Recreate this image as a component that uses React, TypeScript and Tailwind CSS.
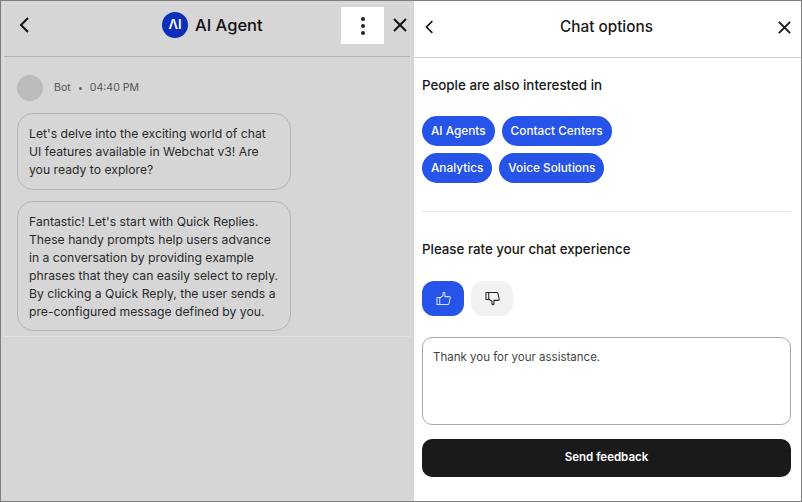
const font = { fontFamily: '"Inter", "Noto Sans", sans-serif' };

function BackIcon({ className }: { className: string }) {
    return (
        <svg viewBox="0 0 12 18" className={className} fill="none" stroke="currentColor" strokeWidth="2">
            <path d="M10 2 3 9l7 7" />
        </svg>
    );
}

function CloseIcon({ className }: { className: string }) {
    return (
        <svg viewBox="0 0 16 16" className={className} fill="none" stroke="currentColor" strokeWidth="2">
            <path d="M2 2l12 12M14 2 2 14" />
        </svg>
    );
}

function ThumbIcon({ className }: { className: string }) {
    return (
        <svg viewBox="0 0 16 16" className={className} fill="none" stroke="currentColor" strokeWidth="1.1" strokeLinejoin="round">
            <path d="M1 7h3v7.5H1zM4 7.5 7.5 5V2c0-1 2-1 2 .5V6h4.5c1 0 1.3.8 1.1 1.5l-1.3 6c-.2.7-.6 1-1.3 1H4" />
        </svg>
    );
}

const chips = [['AI Agents', 'Contact Centers'], ['Analytics', 'Voice Solutions']];

export default function App() {
    return (
        <div style={font} className="flex h-[502px] w-[802px] overflow-hidden border border-[#7f7f7f] bg-white">
            {/* dimmed chat behind the options sheet */}
            <div className="w-[413px] shrink-0 bg-[#d6d6d6] pl-[2px] pr-[3px] pt-[2px]">
                <div className="flex flex-col border-x border-t border-[#dedede]">
                    <div className="flex h-[53px] shrink-0 items-center border-b border-[#b4b4b4] pb-[10px] pl-[14px] text-[#111]">
                        <BackIcon className="h-[18px] w-[12px] shrink-0" />
                        <div className="ml-[132px] flex h-[26px] w-[26px] shrink-0 items-center justify-center rounded-full bg-[#0b2fb8] text-[13px] font-semibold text-white">
                            ΛI
                        </div>
                        <span className="ml-[7px] w-[67px] shrink-0 whitespace-nowrap text-[16.5px] font-medium leading-none">AI Agent</span>
                        <div className="ml-[79px] mt-[3px] flex h-[37px] w-[43px] shrink-0 flex-col items-center justify-center gap-[3px] self-start bg-white">
                            <span className="h-[4px] w-[4px] rounded-full bg-[#222]" />
                            <span className="h-[4px] w-[4px] rounded-full bg-[#222]" />
                            <span className="h-[4px] w-[4px] rounded-full bg-[#222]" />
                        </div>
                        <CloseIcon className="ml-[8px] h-[16px] w-[16px] shrink-0" />
                    </div>
                    <div className="flex h-[280px] shrink-0 flex-col border-b border-[#e0e0e0] pl-[13px] pt-[18px]">
                        <div className="flex items-center">
                            <div className="h-[26px] w-[26px] rounded-full bg-[#bcbcbc]" />
                            <span className="ml-[11px] text-[10.6px] text-[#555]">Bot</span>
                            <span className="mx-[8px] h-[3px] w-[3px] rounded-full bg-[#666]" />
                            <span className="text-[10.6px] text-[#555]">04:40 PM</span>
                        </div>
                        <div className="mt-[12px] w-[274px] rounded-[16px] border border-[#b5b5b5] pb-[10px] pl-[11px] pr-[14px] pt-[11px] text-[12.2px] leading-[18px] text-[#2a2a2a]">
                            Let's delve into the exciting world of chat UI features available in Webchat v3! Are you ready to explore?
                        </div>
                        <div className="mt-[11px] w-[274px] rounded-[16px] border border-[#b5b5b5] pb-[9px] pl-[11px] pr-[8px] pt-[11px] text-[12.2px] leading-[18px] text-[#2a2a2a]">
                            Fantastic! Let's start with Quick Replies. These handy prompts help users advance in a conversation by providing example phrases that they can easily select to reply. By clicking a Quick Reply, the user sends a pre-configured message defined by you.
                        </div>
                    </div>
                </div>
            </div>

            {/* options sheet */}
            <div className="flex min-w-0 flex-1 flex-col">
                <div className="flex h-[57px] shrink-0 items-center justify-between border-b border-[#cfcfcf] pb-[4px] pl-[10px] pr-[9px] text-[#1a1a1a]">
                    <BackIcon className="h-[16px] w-[10px]" />
                    <span className="ml-[2px] text-[15.3px] font-medium">Chat options</span>
                    <CloseIcon className="h-[15px] w-[15px]" />
                </div>
                <div className="flex flex-1 flex-col px-[8px]">
                    <div className="mt-[18px] text-[13.35px] font-medium leading-[18px] text-[#161616]">People are also interested in</div>
                    <div className="mt-[22px] flex flex-col gap-[7px]">
                        {chips.map((row) => (
                            <div key={row[0]} className="flex gap-[7px]">
                                {row.map((chip) => (
                                    <span key={chip} className="flex h-[30px] items-center rounded-full bg-[#2653e8] px-[9px] pt-[1px] text-[11.8px] font-medium text-white">
                                        {chip}
                                    </span>
                                ))}
                            </div>
                        ))}
                    </div>
                    <div className="mt-[28px] h-px w-[369px] bg-[#e4e4e4]" />
                    <div className="mt-[28px] text-[13.3px] font-medium leading-[18px] text-[#161616]">Please rate your chat experience</div>
                    <div className="mt-[23px] flex gap-[7px]">
                        <div className="flex h-[35px] w-[42px] items-center justify-center rounded-[12px] bg-[#2653e8] text-[#d8e0ff]">
                            <ThumbIcon className="h-[15px] w-[15px]" />
                        </div>
                        <div className="flex h-[35px] w-[42px] items-center justify-center rounded-[12px] bg-[#f2f2f2] text-[#222]">
                            <ThumbIcon className="h-[15px] w-[15px] -scale-y-100" />
                        </div>
                    </div>
                    <div className="mt-[21px] h-[88px] w-[369px] rounded-[10px] border border-[#a8a8a8] px-[10px] pt-[10px] text-[11.5px] leading-[18px] text-[#444]">
                        Thank you for your assistance.
                    </div>
                    <div className="mt-[14px] flex h-[38px] w-[369px] items-center justify-center rounded-[10px] bg-[#1a1a1a] text-[11.5px] font-semibold text-white">
                        Send feedback
                    </div>
                </div>
            </div>
        </div>
    );
}
